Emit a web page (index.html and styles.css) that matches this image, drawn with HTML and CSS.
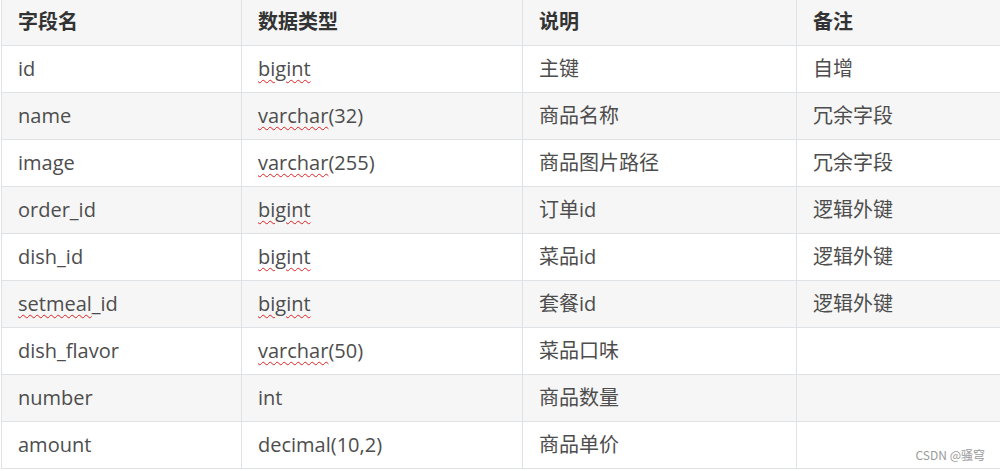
FILE: index.html
```html
<!DOCTYPE html>
<html lang="zh">
<head>
<meta charset="utf-8">
<link rel="stylesheet" href="styles.css">
</head>
<body>
<div class="page">
<table class="tbl">
  <colgroup>
    <col class="c1"><col class="c2"><col class="c3"><col class="c4">
  </colgroup>
  <thead>
    <tr><th>字段名</th><th>数据类型</th><th>说明</th><th>备注</th></tr>
  </thead>
  <tbody>
    <tr><td>id</td><td><span class="sp">bigint</span></td><td>主键</td><td>自增</td></tr>
    <tr><td>name</td><td><span class="sp">varchar</span>(32)</td><td>商品名称</td><td>冗余字段</td></tr>
    <tr><td>image</td><td><span class="sp">varchar</span>(255)</td><td>商品图片路径</td><td>冗余字段</td></tr>
    <tr><td>order_id</td><td><span class="sp">bigint</span></td><td>订单id</td><td>逻辑外键</td></tr>
    <tr><td>dish_id</td><td><span class="sp">bigint</span></td><td>菜品id</td><td>逻辑外键</td></tr>
    <tr><td><span class="sp">setmeal</span>_id</td><td><span class="sp">bigint</span></td><td>套餐id</td><td>逻辑外键</td></tr>
    <tr><td>dish_flavor</td><td><span class="sp">varchar</span>(50)</td><td>菜品口味</td><td></td></tr>
    <tr><td>number</td><td>int</td><td>商品数量</td><td></td></tr>
    <tr><td>amount</td><td>decimal(10,2)</td><td>商品单价</td><td></td></tr>
  </tbody>
</table>
<div class="wm">CSDN @骚穹</div>
</div>
</body>
</html>
```
FILE: styles.css
```css
html, body {
  margin: 0;
  padding: 0;
  background: #fff;
  overflow: hidden;
}
.page {
  position: relative;
  width: 1000px;
  height: 471px;
  overflow: hidden;
}
.tbl {
  border-collapse: collapse;
  table-layout: fixed;
  width: 1020px;
  margin: -2px 0 0 1px;
  font-family: "Open Sans", "Noto Sans CJK SC", sans-serif;
  font-size: 20px;
  color: #4d4d4d;
}
.c1 { width: 240px; }
.c2 { width: 281px; }
.c3 { width: 274px; }
.c4 { width: 225px; }
.tbl th, .tbl td {
  height: 47px;
  box-sizing: border-box;
  padding: 0 16px;
  border: 1px solid #dfe2e5;
  text-align: left;
  vertical-align: middle;
  white-space: nowrap;
  line-height: 26px;
}
.tbl th {
  font-weight: 700;
  color: #333;
  background: #f6f6f6;
}
.tbl tbody tr:nth-child(even) td {
  background: #f6f6f6;
}
.sp {
  text-decoration: underline wavy #e02020;
  text-decoration-thickness: 1px;
  text-underline-offset: 3px;
}
.wm {
  position: absolute;
  right: 15px;
  bottom: 8px;
  font-family: "Noto Sans CJK SC", "Liberation Sans", sans-serif;
  font-size: 12px;
  color: #9a9a9a;
}
```
